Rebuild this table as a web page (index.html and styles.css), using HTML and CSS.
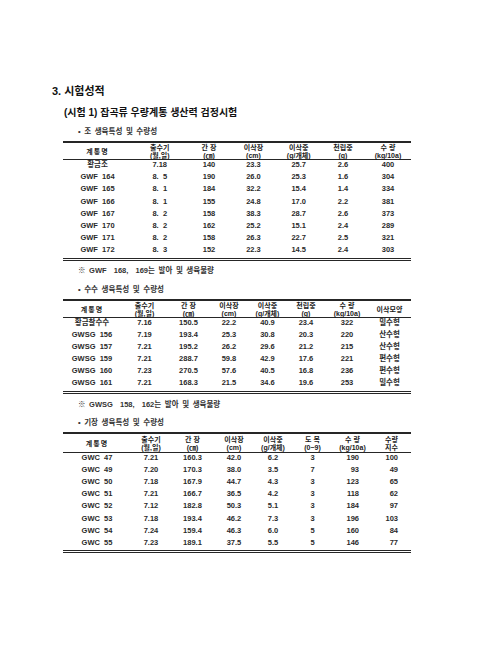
FILE: index.html
```html
<!DOCTYPE html>
<html lang="ko">
<head>
<meta charset="utf-8">
<title>시험성적</title>
<link rel="stylesheet" href="styles.css">
</head>
<body>
<div class="page">
  <h1 class="title">3. 시험성적</h1>
  <h2 class="subtitle">(시험 1) 잡곡류 우량계통 생산력 검정시험</h2>

  <p class="bullet">• 조 생육특성 및 수량성</p>
  <div class="tbl t1">
    <div class="row head"><div class="sp">계통명</div><div>출수기<br>(월,일)</div><div>간 장<br>(㎝)</div><div>이삭장<br>(cm)</div><div>이삭중<br>(g/개체)</div><div>천립중<br>(g)</div><div>수 량<br>(kg/10a)</div></div>
    <div class="row"><div>황금조</div><div>7.18</div><div>140</div><div>23.3</div><div>25.7</div><div>2.6</div><div>400</div></div>
    <div class="row"><div>GWF&nbsp; 164</div><div>8.&nbsp; 5</div><div>190</div><div>26.0</div><div>25.3</div><div>1.6</div><div>304</div></div>
    <div class="row"><div>GWF&nbsp; 165</div><div>8.&nbsp; 1</div><div>184</div><div>32.2</div><div>15.4</div><div>1.4</div><div>334</div></div>
    <div class="row"><div>GWF&nbsp; 166</div><div>8.&nbsp; 1</div><div>155</div><div>24.8</div><div>17.0</div><div>2.2</div><div>381</div></div>
    <div class="row"><div>GWF&nbsp; 167</div><div>8.&nbsp; 2</div><div>158</div><div>38.3</div><div>28.7</div><div>2.6</div><div>373</div></div>
    <div class="row"><div>GWF&nbsp; 170</div><div>8.&nbsp; 2</div><div>162</div><div>25.2</div><div>15.1</div><div>2.4</div><div>289</div></div>
    <div class="row"><div>GWF&nbsp; 171</div><div>8.&nbsp; 2</div><div>158</div><div>26.3</div><div>22.7</div><div>2.5</div><div>321</div></div>
    <div class="row"><div>GWF&nbsp; 172</div><div>8.&nbsp; 3</div><div>152</div><div>22.3</div><div>14.5</div><div>2.4</div><div>303</div></div>
  </div>
  <p class="note">※ GWF&nbsp; 168,&nbsp; 169는 발아 및 생육불량</p>

  <p class="bullet b2">• 수수 생육특성 및 수량성</p>
  <div class="tbl t2">
    <div class="row head"><div class="sp">계통명</div><div>출수기<br>(월,일)</div><div>간 장<br>(㎝)</div><div>이삭장<br>(cm)</div><div>이삭중<br>(g/개체)</div><div>천립중<br>(g)</div><div>수 량<br>(kg/10a)</div><div class="one">이삭모양</div></div>
    <div class="row"><div>황금찰수수</div><div>7.16</div><div>150.5</div><div>22.2</div><div>40.9</div><div>23.4</div><div>322</div><div>밀수형</div></div>
    <div class="row"><div>GWSG&nbsp; 156</div><div>7.19</div><div>193.4</div><div>25.3</div><div>30.8</div><div>20.3</div><div>220</div><div>산수형</div></div>
    <div class="row"><div>GWSG&nbsp; 157</div><div>7.21</div><div>195.2</div><div>26.2</div><div>29.6</div><div>21.2</div><div>215</div><div>산수형</div></div>
    <div class="row"><div>GWSG&nbsp; 159</div><div>7.21</div><div>288.7</div><div>59.8</div><div>42.9</div><div>17.6</div><div>221</div><div>편수형</div></div>
    <div class="row"><div>GWSG&nbsp; 160</div><div>7.23</div><div>270.5</div><div>57.6</div><div>40.5</div><div>16.8</div><div>236</div><div>편수형</div></div>
    <div class="row"><div>GWSG&nbsp; 161</div><div>7.21</div><div>168.3</div><div>21.5</div><div>34.6</div><div>19.6</div><div>253</div><div>밀수형</div></div>
  </div>
  <p class="note n2">※ GWSG&nbsp; 158,&nbsp; 162는 발아 및 생육불량</p>

  <p class="bullet">• 기장 생육특성 및 수량성</p>
  <div class="tbl t3">
    <div class="row head"><div class="sp">계통명</div><div>출수기<br>(월,일)</div><div>간 장<br>(㎝)</div><div>이삭장<br>(cm)</div><div>이삭중<br>(g/개체)</div><div>도 복<br>(0~9)</div><div>수 량<br>(kg/10a)</div><div>수량<br>지수</div></div>
    <div class="row"><div>GWC&nbsp; 47</div><div>7.21</div><div>160.3</div><div>42.0</div><div>6.2</div><div>3</div><div class="r">190</div><div class="r">100</div></div>
    <div class="row"><div>GWC&nbsp; 49</div><div>7.20</div><div>170.3</div><div>38.0</div><div>3.5</div><div>7</div><div class="r">93</div><div class="r">49</div></div>
    <div class="row"><div>GWC&nbsp; 50</div><div>7.18</div><div>167.9</div><div>44.7</div><div>4.3</div><div>3</div><div class="r">123</div><div class="r">65</div></div>
    <div class="row"><div>GWC&nbsp; 51</div><div>7.21</div><div>166.7</div><div>36.5</div><div>4.2</div><div>3</div><div class="r">118</div><div class="r">62</div></div>
    <div class="row"><div>GWC&nbsp; 52</div><div>7.12</div><div>182.8</div><div>50.3</div><div>5.1</div><div>3</div><div class="r">184</div><div class="r">97</div></div>
    <div class="row"><div>GWC&nbsp; 53</div><div>7.18</div><div>193.4</div><div>46.2</div><div>7.3</div><div>3</div><div class="r">196</div><div class="r">103</div></div>
    <div class="row"><div>GWC&nbsp; 54</div><div>7.24</div><div>159.4</div><div>46.3</div><div>6.0</div><div>5</div><div class="r">160</div><div class="r">84</div></div>
    <div class="row"><div>GWC&nbsp; 55</div><div>7.23</div><div>189.1</div><div>37.5</div><div>5.5</div><div>5</div><div class="r">146</div><div class="r">77</div></div>
  </div>
</div>
</body>
</html>
```
FILE: styles.css
```css
html, body {
  margin: 0;
  padding: 0;
  background: #ffffff;
}
body {
  color: #1e1e1e;
  font-family: "Liberation Sans", "Noto Sans CJK KR", sans-serif;
}
.page {
  padding-top: 84px;
  width: 480px;
}
.title {
  margin: 0 0 0 52px;
  font-size: 11px;
  line-height: 14px;
  font-weight: 700;
  color: #111;
}
.subtitle {
  margin: 9px 0 0 64px;
  font-size: 10px;
  line-height: 12px;
  font-weight: 700;
  color: #111;
}
.bullet {
  margin: 8px 0 0 78px;
  font-size: 7.5px;
  line-height: 10px;
  word-spacing: 1.5px;
  font-weight: 700;
  color: #333;
}
.b2 {
  margin-top: 9px;
}
.note {
  margin: 5px 0 0 78px;
  font-size: 7.5px;
  line-height: 10px;
  word-spacing: 1.5px;
  font-weight: 700;
  color: #333;
}
.n2 {
  margin-top: 6px;
}
.tbl {
  margin: 4px 0 0 63px;
  width: 348px;
  border-top: 2px solid #262626;
  border-bottom: 3px double #262626;
}
.row {
  display: grid;
  height: 12.2px;
  line-height: 10px;
  font-size: 7.5px;
  font-weight: 700;
  color: #2a2a2a;
  text-align: center;
  white-space: nowrap;
}
.row.head {
  height: 15px;
  padding-top: 1px;
  line-height: 8px;
  font-size: 7px;
  color: #1a1a1a;
  border-bottom: 1px solid #262626;
}
.head .one,
.head .sp {
  line-height: 15px;
}
.head .sp {
  letter-spacing: 1px;
}
.t1 .row {
  grid-template-columns: 69px 55.5px 43px 46px 44.5px 44px 46px;
}
.t2 .row {
  grid-template-columns: 58px 47px 41px 40px 37px 40px 42px 43px;
}
.t3 .row {
  grid-template-columns: 68px 40px 43px 40px 38px 41px 39px 39px;
}
.t3 .row.head {
  height: 16px;
  padding-top: 2px;
  line-height: 8px;
}
.t3 .head .sp {
  line-height: 16px;
}
.r {
  text-align: right;
  padding-right: 13px;
}
```
